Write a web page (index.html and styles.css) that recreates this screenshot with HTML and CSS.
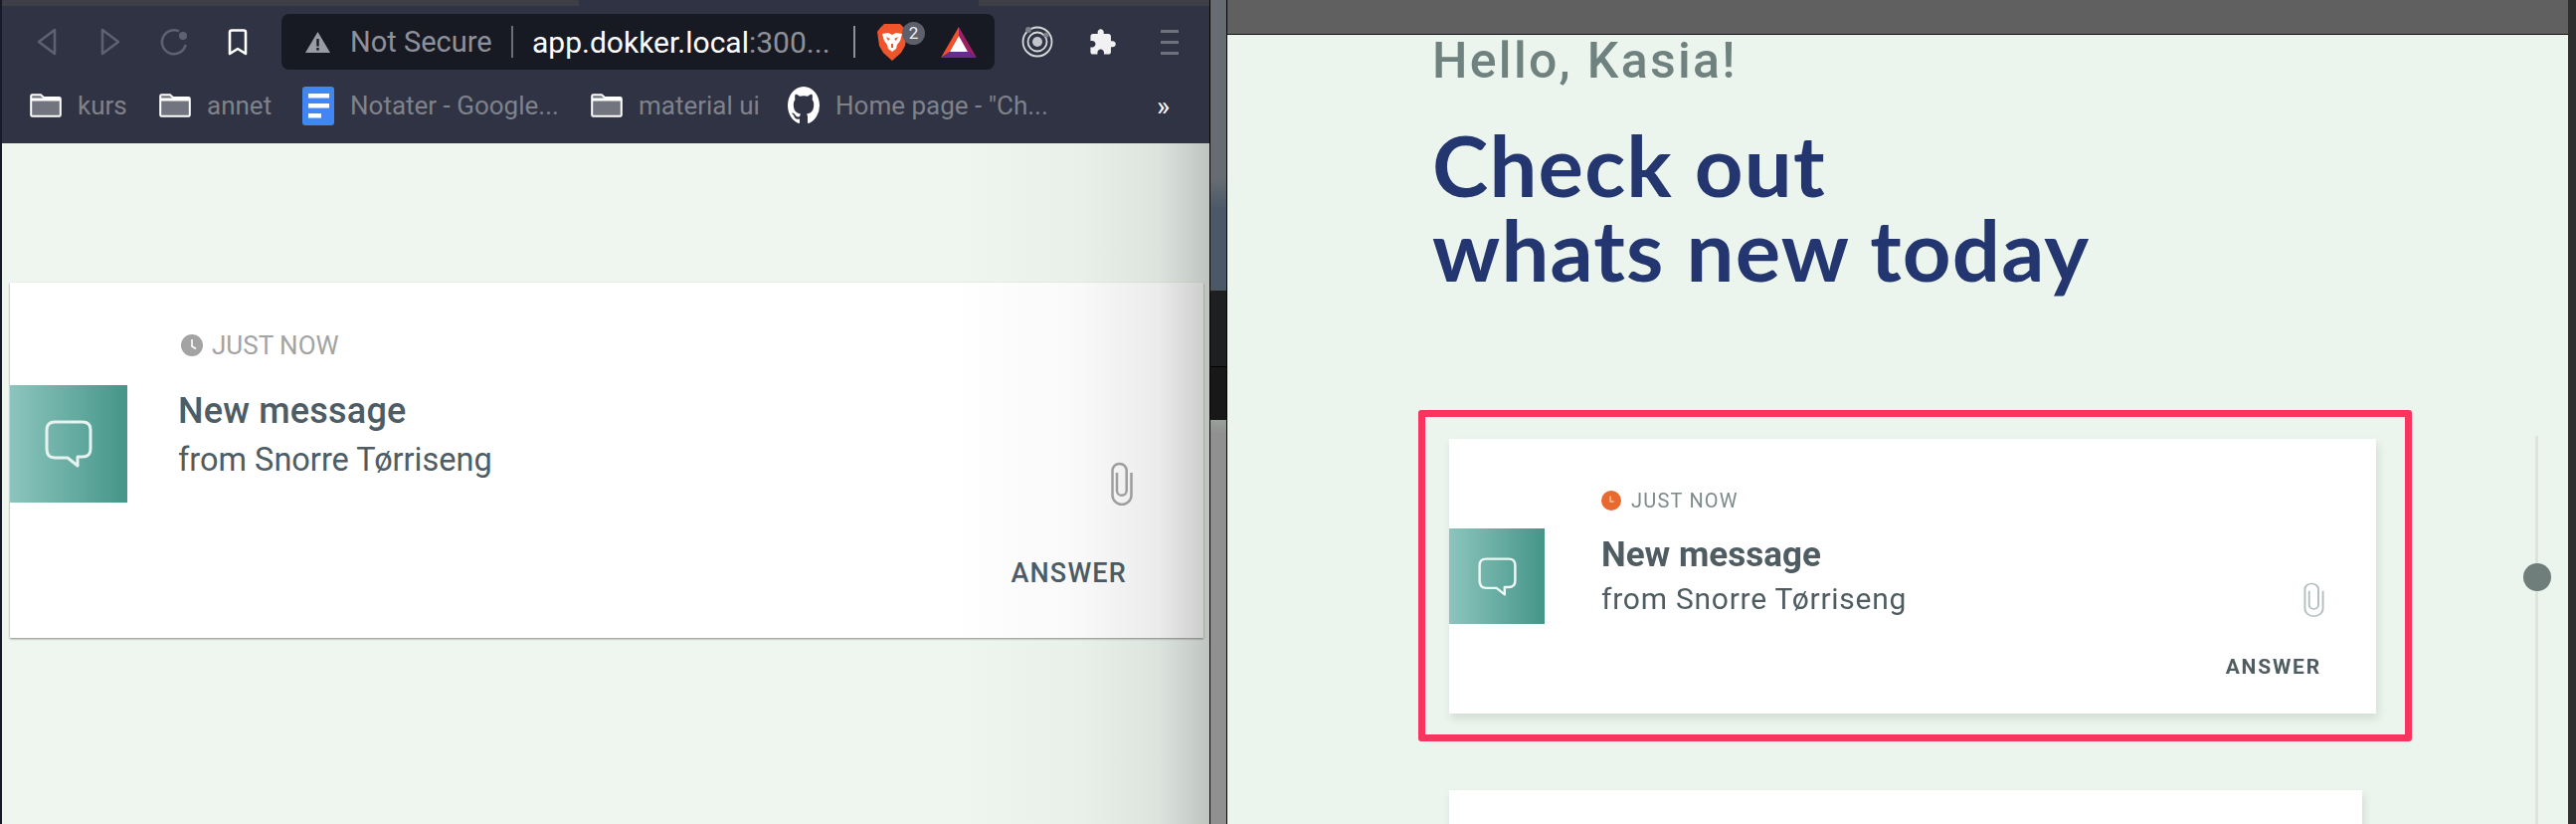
FILE: index.html
```html
<!DOCTYPE html>
<html>
  <head>
    <title>Notifications</title>
    <link rel="stylesheet" href="styles.css">
  </head>
  <body>
    <div class="screen">
      <!-- browser window on the left -->
      <div class="browser">
        <div class="tabstrip">
          <div class="tab"></div>
          <div class="tab-active"></div>
          <div class="tab tab-fill"></div>
        </div>
        <div class="toolbar">
          <svg class="ico-back" width="20" height="28" viewBox="0 0 20 28"><path d="M18 2 L2 14 L18 26 Z" fill="none" stroke="#5e6172" stroke-width="2.6" stroke-linejoin="round"/></svg>
          <svg class="ico-forward" width="20" height="28" viewBox="0 0 20 28"><path d="M2 2 L18 14 L2 26 Z" fill="none" stroke="#5e6172" stroke-width="2.6" stroke-linejoin="round"/></svg>
          <svg class="ico-reload" width="28" height="28" viewBox="0 0 28 28"><path d="M19 3.4 A12 12 0 1 0 25.6 17" fill="none" stroke="#5e6172" stroke-width="2.6"/><circle cx="23" cy="8" r="4" fill="#5e6172"/></svg>
          <svg class="ico-bookmark" width="20" height="27" viewBox="0 0 20 27"><path d="M2 3.5 Q2 1.5 4 1.5 H16 Q18 1.5 18 3.5 V25 L10 20 L2 25 Z" fill="none" stroke="#fff" stroke-width="2.6" stroke-linejoin="round"/></svg>
          <div class="address">
            <svg width="25" height="21" viewBox="0 0 25 21"><path d="M12.5 0 L25 21 H0 Z" fill="#9a9ca5"/><rect x="11.3" y="7" width="2.4" height="7.5" fill="#171a23"/><rect x="11.3" y="16" width="2.4" height="2.6" fill="#171a23"/></svg>
            <span class="not-secure">Not Secure</span>
            <span class="address-sep"></span>
            <span class="url">app.dokker.local<span class="url-port">:300...</span></span>
            <span class="address-sep address-sep-2"></span>
            <div class="shield">
              <svg width="30" height="37" viewBox="0 0 30 37">
                <path d="M7 0 H23 L27 4 L30 8 L28 22 L24 29 L15 37 L6 29 L2 22 L0 8 L3 4 Z" fill="#f0542a"/>
                <path d="M5 10 L11 9 L15 11 L19 9 L25 10 L23 17 L20 21 L19 25 L15 28 L11 25 L10 21 L7 17 Z" fill="#fff"/>
                <path d="M9 13 L13 15 L11 17 Z M21 13 L17 15 L19 17 Z M14 20 H16 V24 H14 Z" fill="#f0542a"/>
              </svg>
              <span class="shield-badge">2</span>
            </div>
            <svg class="ico-bat" width="36" height="31" viewBox="0 0 36 31">
              <path d="M18 0 L0 31 L9 25 L18 9 Z" fill="#f4502c"/>
              <path d="M18 0 L36 31 L27 25 L18 9 Z" fill="#9e1f63"/>
              <path d="M0 31 H36 L27 25 H9 Z" fill="#662d91"/>
              <path d="M18 9 L27 25 H9 Z" fill="#fff"/>
            </svg>
          </div>
          <svg class="ico-target" width="32" height="32" viewBox="0 0 32 32">
            <circle cx="16" cy="16" r="14.5" fill="none" stroke="#d8d9dc" stroke-width="1.8"/>
            <circle cx="16" cy="16" r="9.5" fill="none" stroke="#d8d9dc" stroke-width="1.8"/>
            <circle cx="16" cy="16" r="5" fill="#c5c6cb"/>
            <circle cx="7" cy="4" r="3" fill="#7d7f89"/>
            <circle cx="25" cy="9" r="2.6" fill="#7d7f89"/>
          </svg>
          <svg class="ico-puzzle" width="29" height="29" viewBox="0 0 24 24"><path fill="#f1f1f3" d="M20.5 11H19V7c0-1.1-.9-2-2-2h-4V3.5C13 2.12 11.88 1 10.5 1S8 2.12 8 3.5V5H4c-1.1 0-1.99.9-1.99 2v3.8H3.5c1.49 0 2.7 1.21 2.7 2.7s-1.21 2.7-2.7 2.7H2V20c0 1.1.9 2 2 2h3.8v-1.5c0-1.49 1.21-2.7 2.7-2.7 1.49 0 2.7 1.21 2.7 2.7V22H17c1.1 0 2-.9 2-2v-4h1.5c1.38 0 2.5-1.12 2.5-2.5S21.88 11 20.5 11z"/></svg>
          <div class="menu-lines"><span></span><span></span><span></span></div>
        </div>
        <div class="bookmarks">
          <div class="bm bm-kurs">
            <svg class="folder" width="32" height="24" viewBox="0 0 32 24"><path d="M1.2 2.5 Q1.2 1.2 2.5 1.2 H11 L14 4 H29.5 Q30.8 4 30.8 5.3 V21.5 Q30.8 22.8 29.5 22.8 H2.5 Q1.2 22.8 1.2 21.5 Z" fill="#72747f" stroke="#fff" stroke-width="2"/><path d="M2 4.5 H30 V7.5 H2 Z" fill="#fff"/></svg>
            <span>kurs</span>
          </div>
          <div class="bm bm-annet">
            <svg class="folder" width="32" height="24" viewBox="0 0 32 24"><path d="M1.2 2.5 Q1.2 1.2 2.5 1.2 H11 L14 4 H29.5 Q30.8 4 30.8 5.3 V21.5 Q30.8 22.8 29.5 22.8 H2.5 Q1.2 22.8 1.2 21.5 Z" fill="#72747f" stroke="#fff" stroke-width="2"/><path d="M2 4.5 H30 V7.5 H2 Z" fill="#fff"/></svg>
            <span>annet</span>
          </div>
          <div class="bm bm-docs">
            <svg width="32" height="39" viewBox="0 0 32 39"><rect width="32" height="39" rx="3" fill="#4285f4"/><rect x="6" y="7" width="21" height="4.5" fill="#fff"/><rect x="6" y="17" width="21" height="4.5" fill="#fff"/><rect x="6" y="27" width="13" height="4.5" fill="#fff"/></svg>
            <span>Notater - Google...</span>
          </div>
          <div class="bm bm-material">
            <svg class="folder" width="32" height="24" viewBox="0 0 32 24"><path d="M1.2 2.5 Q1.2 1.2 2.5 1.2 H11 L14 4 H29.5 Q30.8 4 30.8 5.3 V21.5 Q30.8 22.8 29.5 22.8 H2.5 Q1.2 22.8 1.2 21.5 Z" fill="#72747f" stroke="#fff" stroke-width="2"/><path d="M2 4.5 H30 V7.5 H2 Z" fill="#fff"/></svg>
            <span>material ui</span>
          </div>
          <div class="bm bm-github">
            <svg width="32" height="38" viewBox="0 0 16 16" preserveAspectRatio="none"><path fill="#fff" d="M8 0C3.58 0 0 3.58 0 8c0 3.54 2.29 6.53 5.47 7.59.4.07.55-.17.55-.38 0-.19-.01-.82-.01-1.49-2.01.37-2.53-.49-2.69-.94-.09-.23-.48-.94-.82-1.13-.28-.15-.68-.52-.01-.53.63-.01 1.08.58 1.23.82.72 1.21 1.87.87 2.33.66.07-.52.28-.87.51-1.07-1.78-.2-3.64-.89-3.64-3.95 0-.87.31-1.59.82-2.15-.08-.2-.36-1.02.08-2.12 0 0 .67-.21 2.2.82.64-.18 1.32-.27 2-.27.68 0 1.36.09 2 .27 1.53-1.04 2.2-.82 2.2-.82.44 1.1.16 1.92.08 2.12.51.56.82 1.27.82 2.15 0 3.07-1.87 3.75-3.65 3.95.29.25.54.73.54 1.48 0 1.07-.01 1.93-.01 2.2 0 .21.15.46.55.38A8.013 8.013 0 0016 8c0-4.42-3.58-8-8-8z"/></svg>
            <span>Home page - "Ch...</span>
          </div>
          <span class="more">»</span>
        </div>
        <div class="page">
          <div class="card">
            <div class="thumb">
              <svg width="48" height="48" viewBox="0 0 48 48"><path d="M10 2 H38 Q46 2 46 10 V29 Q46 37 38 37 H33 V46 L23 38 H10 Q2 38 2 29 V10 Q2 2 10 2 Z" fill="none" stroke="#e6f3f0" stroke-width="3" stroke-linejoin="round"/></svg>
            </div>
            <div class="card-text">
              <div class="time">
                <svg width="22" height="22" viewBox="0 0 22 22"><circle cx="11" cy="11" r="11" fill="#a3a3a3"/><path d="M11 5 V12 L15 14.5" fill="none" stroke="#fff" stroke-width="1.6"/></svg>
                <span>JUST NOW</span>
              </div>
              <div class="card-title">New message</div>
              <div class="card-from">from Snorre Tørriseng</div>
            </div>
            <div class="card-actions">
              <svg class="clip" width="22" height="44" viewBox="0 0 22 44"><path d="M20.5 11 V33.5 A9.5 9.5 0 0 1 1.5 33.5 V9 A7 7 0 0 1 15.7 9 V29 A4.8 4.8 0 0 1 6 29 V11" fill="none" stroke="#a5a5a5" stroke-width="2.5"/></svg>
              <span class="answer">ANSWER</span>
            </div>
          </div>
          <div class="page-shade"></div>
        </div>
      </div>

      <!-- bit of desktop between the two windows -->
      <div class="desktop-gap">
        <div class="gap-a"></div>
        <div class="gap-b"></div>
        <div class="gap-c"></div>
        <div class="gap-d"></div>
      </div>

      <!-- blurry design preview on the right -->
      <div class="preview">
        <div class="preview-bar"></div>
        <div class="preview-page">
          <div class="hello">Hello, Kasia!</div>
          <h1 class="headline">Check out<br>whats new today</h1>
          <div class="frame">
            <div class="pcard">
              <div class="pthumb">
                <svg width="39" height="39" viewBox="0 0 48 48"><path d="M10 2 H38 Q46 2 46 10 V29 Q46 37 38 37 H33 V46 L23 38 H10 Q2 38 2 29 V10 Q2 2 10 2 Z" fill="none" stroke="#eef7f4" stroke-width="3" stroke-linejoin="round"/></svg>
              </div>
              <div class="pcard-text">
                <div class="ptime">
                  <svg width="20" height="20" viewBox="0 0 22 22"><circle cx="11" cy="11" r="11" fill="#e86a2e"/><path d="M10 6 V12 H14" fill="none" stroke="#f6c3a6" stroke-width="1.6"/></svg>
                  <span>JUST NOW</span>
                </div>
                <div class="ptitle">New message</div>
                <div class="pfrom">from Snorre Tørriseng</div>
              </div>
              <div class="pcard-actions">
                <svg class="pclip" width="21" height="35" viewBox="0 0 22 44" preserveAspectRatio="none"><path d="M20.5 11 V33.5 A9.5 9.5 0 0 1 1.5 33.5 V9 A7 7 0 0 1 15.7 9 V29 A4.8 4.8 0 0 1 6 29 V11" fill="none" stroke="#b3bfc0" stroke-width="2"/></svg>
                <span class="panswer">ANSWER</span>
              </div>
            </div>
          </div>
          <div class="pcard-next"></div>
          <div class="rail"></div>
          <div class="rail-dot"></div>
        </div>
      </div>

      <div class="edge"></div>
    </div>
  </body>
</html>
```

FILE: styles.css
```css
html, body {
  margin: 0;
  padding: 0;
}
body {
  font-family: Roboto, "Liberation Sans", sans-serif;
  background: #2f2f2f;
}
.screen {
  width: 2590px;
  height: 828px;
  display: flex;
  overflow: hidden;
}

/* left browser */
.browser {
  width: 1214px;
  border-left: 2px solid #141a28;
  display: flex;
  flex-direction: column;
  background: #2f3344;
}
.tabstrip {
  height: 6px;
  display: flex;
}
.tab {
  width: 580px;
  background: #3e3e47;
}
.tab-active {
  width: 402px;
  background: #2f3344;
}
.tab-fill {
  flex-grow: 1;
  width: auto;
}
.toolbar {
  height: 56px;
  padding: 8px 0 0 0;
  display: flex;
  align-items: center;
}
.ico-back { margin-left: 35px; }
.ico-forward { margin-left: 44px; }
.ico-reload { margin-left: 40px; }
.ico-bookmark { margin-left: 40px; }
.address {
  width: 717px;
  height: 56px;
  margin-left: 34px;
  padding-left: 24px;
  box-sizing: border-box;
  background: #171a23;
  border-radius: 8px;
  display: flex;
  align-items: center;
}
.not-secure {
  margin-left: 20px;
  width: 145px;
  font-size: 29px;
  color: #8f919a;
  white-space: nowrap;
}
.address-sep {
  width: 2px;
  height: 32px;
  margin-left: 17px;
  background: #6d6f78;
}
.url {
  width: 299px;
  margin-left: 19px;
  font-size: 30px;
  color: #fff;
  white-space: nowrap;
}
.url-port {
  color: #8f919a;
}
.address-sep-2 {
  margin-left: 24px;
  background: #8f919a;
}
.shield {
  position: relative;
  width: 30px;
  height: 37px;
  margin-left: 22px;
}
.shield svg {
  display: block;
}
.shield-badge {
  position: absolute;
  left: 25px;
  top: -2px;
  width: 23px;
  height: 23px;
  border-radius: 12px;
  background: #5d5f6b;
  color: #f0f0f2;
  font-size: 17px;
  line-height: 23px;
  text-align: center;
}
.ico-bat { margin-left: 34px; }
.ico-target { margin-left: 27px; }
.ico-puzzle { margin-left: 35px; }
.menu-lines {
  width: 18px;
  margin-left: 44px;
  display: flex;
  flex-direction: column;
  gap: 8px;
}
.menu-lines span {
  display: block;
  height: 3px;
  background: #6f717c;
}
.bookmarks {
  height: 60px;
  margin-top: 6px;
  padding-bottom: 8px;
  display: flex;
  align-items: center;
  font-size: 26px;
  color: #7f828b;
  white-space: nowrap;
}
.bm {
  display: flex;
  align-items: center;
  gap: 16px;
}
.bm-kurs { margin-left: 28px; width: 130px; }
.bm-annet { width: 144px; }
.bm-docs { width: 290px; }
.bm-material { width: 198px; }
.bm-github { width: 371px; }
.more {
  color: #fff;
  font-size: 28px;
}
.page {
  position: relative;
  flex-grow: 1;
  background: #eff6f0;
  padding: 140px 0 0 8px;
}
.card {
  width: 1200px;
  height: 357px;
  background: #fff;
  box-shadow: 0 1px 2px rgba(0, 0, 0, 0.45);
  display: flex;
}
.thumb {
  width: 118px;
  height: 118px;
  margin-top: 103px;
  background: linear-gradient(90deg, #8cc5bd, #459589);
  display: flex;
  align-items: center;
  justify-content: center;
}
.card-text {
  margin-left: 51px;
  padding-top: 51px;
  color: #4d5c65;
}
.time {
  display: flex;
  align-items: center;
  gap: 9px;
  margin-left: 3px;
  height: 24px;
  font-size: 26px;
  color: #a3a3a3;
}
.card-title {
  margin-top: 34px;
  font-size: 36px;
  line-height: 40px;
  font-weight: 500;
  letter-spacing: 0.2px;
}
.card-from {
  margin-top: 10px;
  font-size: 32.5px;
  line-height: 38px;
}
.card-actions {
  margin-left: auto;
  padding: 180px 77px 0 0;
  display: flex;
  flex-direction: column;
  align-items: flex-end;
}
.clip {
  margin-right: -6px;
}
.answer {
  margin-top: 51px;
  font-size: 27px;
  line-height: 34px;
  font-weight: 500;
  letter-spacing: 1.2px;
  color: #4d5c65;
}
.page-shade {
  position: absolute;
  top: 0;
  right: 0;
  bottom: 0;
  width: 260px;
  background: linear-gradient(90deg, rgba(60, 60, 60, 0) 0, rgba(60, 60, 60, 0.03) 50%, rgba(60, 60, 60, 0.1) 80%, rgba(60, 60, 60, 0.27) 100%);
}

/* desktop showing between the windows */
.desktop-gap {
  width: 16px;
  border-left: 1px solid #000;
  border-right: 1px solid #000;
  display: flex;
  flex-direction: column;
}
.gap-a {
  height: 291px;
  background: linear-gradient(180deg, #666c72 0, #666c72 180px, #4b5867 210px, #4b5867 100%);
}
.gap-b {
  height: 77px;
  background: #1e1f20;
  border-top: 1px solid #555;
  box-sizing: border-box;
}
.gap-c {
  height: 54px;
  background: #181818;
  border-top: 1px solid #000;
  box-sizing: border-box;
}
.gap-d {
  flex-grow: 1;
  background: linear-gradient(180deg, #9aa09a 0, #8f908f 14px);
}

/* right preview */
.preview {
  width: 1348px;
  display: flex;
  flex-direction: column;
}
.preview-bar {
  height: 34px;
  flex-shrink: 0;
  background: #5f605f;
  border-bottom: 1px solid #111;
}
.preview-page {
  position: relative;
  flex-grow: 1;
  background: #ecf5ed;
  padding-left: 192px;
  filter: blur(0.6px);
}
.hello {
  margin: 1px 0 0 14px;
  font-size: 50px;
  line-height: 50px;
  font-weight: 500;
  letter-spacing: 2.3px;
  color: #6f827f;
}
.headline {
  margin: 37px 0 0 14px;
  font-family: Lato, sans-serif;
  font-size: 85px;
  line-height: 85px;
  font-weight: 700;
  letter-spacing: 1.2px;
  color: #23366f;
}
.frame {
  width: 999px;
  height: 333px;
  margin-top: 119px;
  box-sizing: border-box;
  border: 7px solid #f9345f;
  border-radius: 3px;
  padding: 22px 0 0 24px;
}
.pcard {
  width: 932px;
  height: 276px;
  background: #fff;
  box-shadow: 2px 5px 8px rgba(90, 110, 100, 0.18);
  display: flex;
}
.pthumb {
  width: 96px;
  height: 96px;
  margin-top: 90px;
  background: linear-gradient(90deg, #8cc5bd, #459589);
  display: flex;
  align-items: center;
  justify-content: center;
}
.pcard-text {
  margin-left: 57px;
  padding-top: 52px;
  color: #4f5d62;
}
.ptime {
  display: flex;
  align-items: center;
  gap: 10px;
  height: 20px;
  font-size: 20px;
  letter-spacing: 1.2px;
  color: #7d8a8b;
}
.ptitle {
  margin-top: 25px;
  font-size: 35px;
  line-height: 40px;
  font-weight: 700;
}
.pfrom {
  margin-top: 5px;
  font-size: 30px;
  line-height: 38px;
  letter-spacing: 0.75px;
}
.pcard-actions {
  margin-left: auto;
  padding: 144px 55px 0 0;
  display: flex;
  flex-direction: column;
  align-items: flex-end;
}
.pclip {
  margin-right: -3px;
}
.panswer {
  margin-top: 37px;
  font-size: 21px;
  line-height: 26px;
  font-weight: 700;
  letter-spacing: 1.8px;
  color: #4f5d62;
}
.pcard-next {
  width: 918px;
  height: 120px;
  margin: 49px 0 0 31px;
  background: #fff;
  box-shadow: 2px 5px 8px rgba(90, 110, 100, 0.18);
}
.rail {
  position: absolute;
  left: 1315px;
  top: 403px;
  height: 390px;
  width: 3px;
  background: #dde4df;
}
.rail-dot {
  position: absolute;
  left: 1303px;
  top: 531px;
  width: 28px;
  height: 28px;
  border-radius: 14px;
  background: #6f7d7b;
}
.edge {
  flex-grow: 1;
  background: #2f2f2f;
}
```
